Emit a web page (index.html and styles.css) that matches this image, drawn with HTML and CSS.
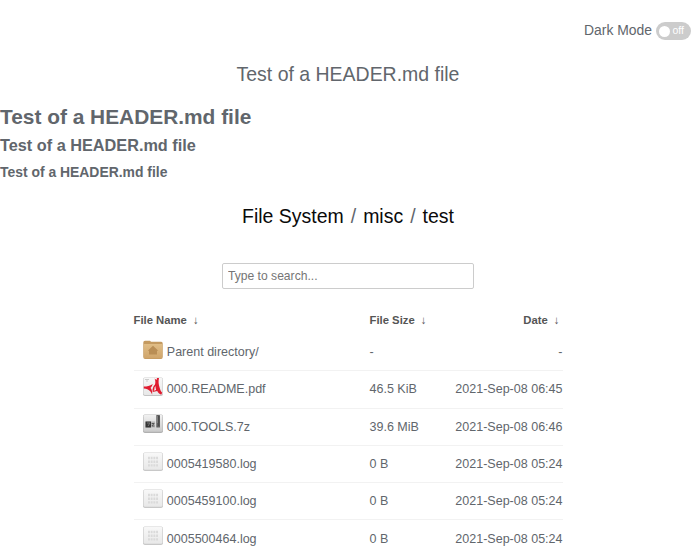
FILE: index.html
```html
<!DOCTYPE html>
<html lang="en">
<head>
<meta charset="utf-8">
<title>File System / misc / test</title>
<link rel="stylesheet" href="styles.css">
</head>
<body>
<svg class="defs" width="0" height="0" aria-hidden="true">
  <defs>
    <linearGradient id="wood" x2="0" y2="1"><stop stop-color="#e0bd86"/><stop offset="1" stop-color="#cfa56b"/></linearGradient>
    <linearGradient id="paper" x2="0" y2="1"><stop stop-color="#f8f8f8"/><stop offset="1" stop-color="#e8e8e8"/></linearGradient>
    <linearGradient id="steel" x2="0" y2="1"><stop stop-color="#f2f2f2"/><stop offset="1" stop-color="#cacaca"/></linearGradient>
    <symbol id="folder" viewBox="0 0 20 20">
      <path d="M.3 2.500Q.3.8 2 .8H7l1 1H18.200q1.500 0 1.500 1.500V17q0 1.900-1.700 1.900H2.200Q.3 18.900.3 17Z" fill="#c49a60"/>
      <path d="M.8 4H19.200V17q0 1.200-1.200 1.200H2.200Q.8 18.200.8 17Z" fill="url(#wood)"/>
      <path d="m10 5.800 5.300 5H14v3.700H6v-3.700H4.700Z" fill="#b98e55"/>
    </symbol>
    <symbol id="pdf" viewBox="0 0 20 20">
      <rect x=".1" y=".6" width="19.800" height="18.400" rx="1.800" fill="#c4c4c4"/>
      <rect x=".6" y=".7" width="18.800" height="17.300" rx="1.500" fill="url(#paper)"/>
      <path d="M2 2.500h4M3 4h2" stroke="#ccc"/>
      <path d="M11.500 1.500 13.500 3 14 1h2c-.8 3.500-.4 6.500.6 9.500.7 2.500 1.400 4.300 2.600 5.200l-1 2c-2-1-3-1.900-4-3.700l-4.500 1C9.200 12 10 9.500 12 7.500c.6-2 .5-4-.5-6Z" fill="#e01c30"/>
      <path d="M11.500 10.500q.3 1.700-.8 3.300l2.400-.8Q12.500 11.500 12.500 9Z" fill="#f4f4f4"/>
      <path d="M.8 9.500C4 9.500 7 9 9.700 7c-.5 2-1.200 3-2.200 3.800 1.500 2 2 4.200 1.600 6.900-1-3-2.600-5.700-8.300-6.200Z" fill="#e01c30"/>
    </symbol>
    <symbol id="archive" viewBox="0 0 20 20">
      <rect x=".1" y=".6" width="19.800" height="18.400" rx="1.800" fill="#b0b0b0"/>
      <rect x=".6" y=".7" width="18.800" height="17" rx="1.500" fill="url(#steel)"/>
      <path d="M2.500 7.500H12v6H2.500Z" fill="#b4b4b4"/>
      <path d="M2.500 7.500H8v6H2.500Z" fill="#343434"/>
      <path d="M4 9h3l-2 3" fill="none" stroke="#777"/>
      <path d="M8.700 9.500h2.400l-2.200 2.500h2.500" fill="none" stroke="#555"/>
      <rect x="13.300" y="1" width="3.700" height="12.500" rx=".6" fill="#606060"/>
      <path d="M14.300 2v7" stroke="#888"/><path d="M15.800 2v10" stroke="#444"/>
    </symbol>
    <symbol id="log" viewBox="0 0 20 20">
      <rect x=".1" y=".6" width="19.800" height="18.400" rx="1.800" fill="#c8c8c8"/>
      <rect x=".7" y=".8" width="18.600" height="17" rx="1.500" fill="url(#paper)"/>
      <path d="M5 6h10M5 9.700h10M5 13.400h10" stroke="#dadada" stroke-width="2.400" stroke-dasharray="1.900 .8"/>
    </symbol>
  </defs>
</svg>
<div class="mode"><span>Dark Mode</span><span class="switch"><i class="knob"></i>off</span></div>
<header class="title">Test of a HEADER.md file</header>
<section class="readme">
  <h1>Test of a HEADER.md file</h1>
  <h3>Test of a HEADER.md file</h3>
  <h4>Test of a HEADER.md file</h4>
</section>
<nav class="crumbs"><a>File System</a><span>/</span><a>misc</a><span>/</span><a>test</a></nav>
<input class="search" type="text" placeholder="Type to search...">
<table class="list">
  <thead><tr><th class="name">File Name<span class="arrow">↓</span></th><th class="size">File Size<span class="arrow">↓</span></th><th class="date">Date<span class="arrow last">↓</span></th></tr></thead>
  <tbody>
    <tr><td><div class="file"><svg><use href="#folder"/></svg>Parent directory/</div></td><td>-</td><td class="date">-</td></tr>
    <tr><td><div class="file"><svg><use href="#pdf"/></svg>000.README.pdf</div></td><td>46.5 KiB</td><td class="date">2021-Sep-08 06:45</td></tr>
    <tr><td><div class="file"><svg><use href="#archive"/></svg>000.TOOLS.7z</div></td><td>39.6 MiB</td><td class="date">2021-Sep-08 06:46</td></tr>
    <tr><td><div class="file"><svg><use href="#log"/></svg>0005419580.log</div></td><td>0 B</td><td class="date">2021-Sep-08 05:24</td></tr>
    <tr><td><div class="file"><svg><use href="#log"/></svg>0005459100.log</div></td><td>0 B</td><td class="date">2021-Sep-08 05:24</td></tr>
    <tr><td><div class="file"><svg><use href="#log"/></svg>0005500464.log</div></td><td>0 B</td><td class="date">2021-Sep-08 05:24</td></tr>
  </tbody>
</table>
</body>
</html>
```
FILE: styles.css
```css
* { box-sizing: border-box; }
html { overflow: hidden; }
body {
  display: flex;
  flex-direction: column;
  margin: 0;
  height: 557px;
  overflow: hidden;
  background: #fff;
  color: #61666c;
  font: 13.920px/20px "Liberation Sans", Arial, sans-serif;
}
body > * { flex-shrink: 0; }
.defs { display: block; height: 0; }
.mode {
  display: flex;
  justify-content: flex-end;
  align-items: center;
  gap: 4px;
  height: 20px;
  margin-top: 20px;
  padding-right: 5px;
}
.switch {
  display: flex;
  align-items: center;
  gap: 2.500px;
  width: 35px;
  height: 18px;
  margin-top: 2px;
  padding-left: 3px;
  border-radius: 9px;
  background: #ccc;
  color: #fff;
  font-size: 10.440px;
}
.knob { width: 11px; height: 11px; border-radius: 50%; background: #fff; }
.title {
  margin-top: 22px;
  font-size: 19.488px;
  line-height: 24px;
  text-align: center;
}
.readme { height: 94px; padding-top: 19px; }
.readme h1, .readme h3, .readme h4 { margin: 0; }
.readme h1 { font-size: 20.880px; line-height: 24px; }
.readme h3 { margin-top: 6px; font-size: 16.286px; line-height: 20px; }
.readme h4 { margin-top: 7px; font-size: 13.920px; line-height: 20px; }
.crumbs {
  display: flex;
  justify-content: center;
  gap: 7px;
  margin-top: 24px;
  font-size: 19.488px;
  line-height: 24px;
}
.crumbs a { color: #0a0a0a; }
.search {
  width: 252.500px;
  height: 26px;
  margin: 35px 0 0 221.500px;
  padding: 0 5.500px;
  border: 1px solid #ccc;
  border-radius: 2px;
  font: 12.110px "Liberation Sans", Arial, sans-serif;
}
.search::placeholder { color: #757575; }
.list {
  width: 429px;
  margin: 21px 0 0 133.500px;
  border-collapse: separate;
  border-spacing: 0;
  table-layout: fixed;
  font-size: 12.528px;
  white-space: nowrap;
}
th { height: 24px; padding: 0; color: #555; font-size: 11.310px; line-height: 20px; text-align: left; vertical-align: top; }
th.name { width: 236px; }
th.size { width: 75px; }
.list .date { text-align: right; }
.arrow { margin-left: 6px; font-weight: 400; }
.arrow.last { margin-right: 3px; }
td { height: 37.300px; padding: 0; border-bottom: 1px solid #f2f2f2; }
.file { display: flex; align-items: center; gap: 4.300px; padding-left: 9px; }
.file svg { width: 20px; height: 20px; margin-top: -4.500px; }
```
